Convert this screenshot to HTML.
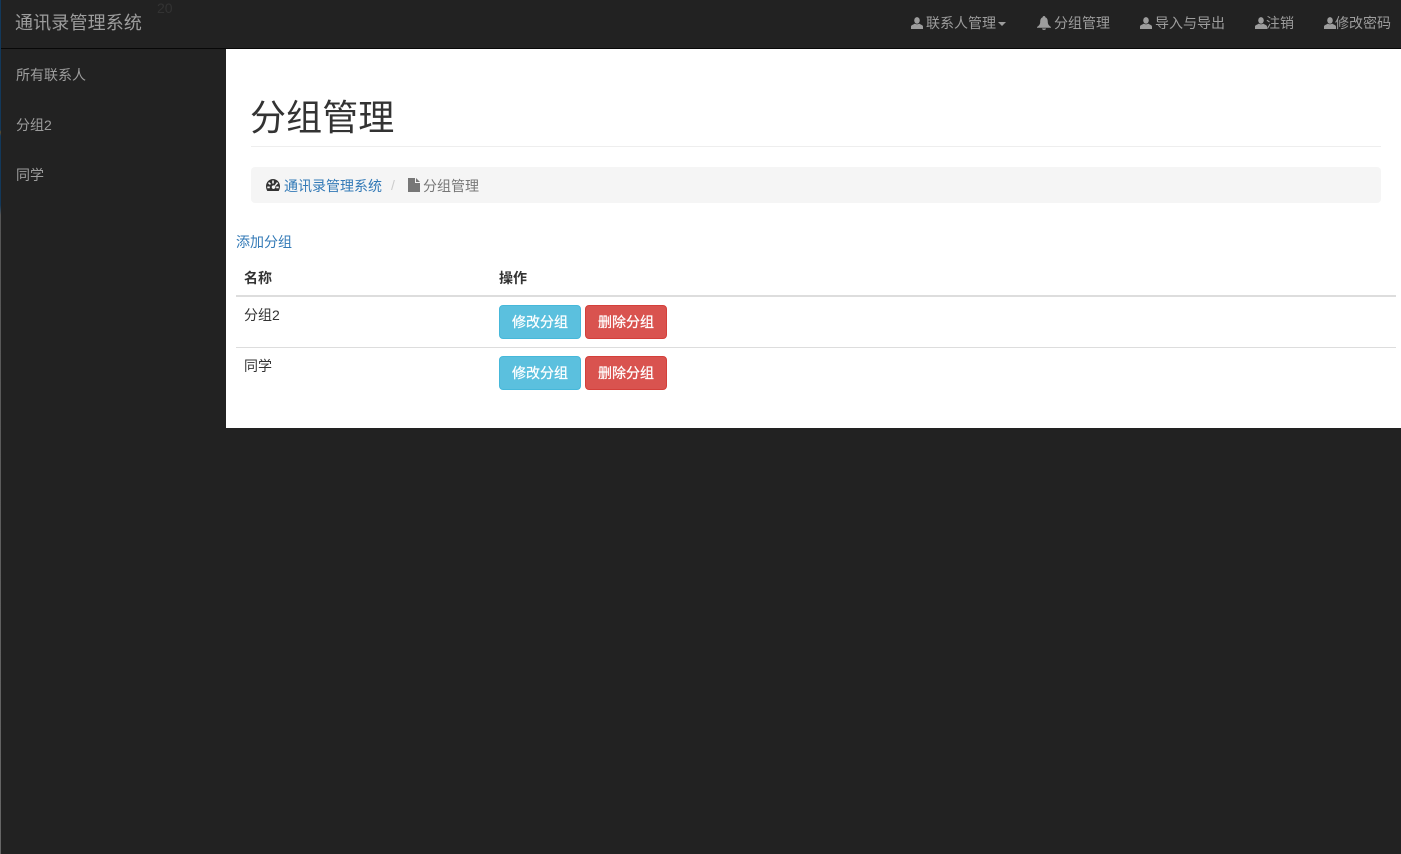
<!DOCTYPE html>
<html lang="zh-CN">
<head>
<meta charset="utf-8">
<title>通讯录管理系统</title>
<style>
*{box-sizing:border-box}
html,body{margin:0;padding:0}
body{width:1401px;height:854px;position:relative;overflow:hidden;background:#222;font-family:"Liberation Sans","Noto Sans CJK SC",sans-serif;font-size:14px;line-height:20px;color:#333}
.abs{position:absolute;white-space:nowrap}
#stripe{left:0;top:0;width:1px;height:854px;background:linear-gradient(to bottom,#12385a 0,#12385a 130px,#5b4a2c 132px,#12385a 136px,#12385a 205px,#555 215px,#666 100%)}
#navline{left:1px;top:48px;width:1400px;height:1px;background:#080808}
.brand{left:15px;top:13px;font-size:18px;color:#9d9d9d;line-height:20px;letter-spacing:.15px}
.num{left:157px;top:0;font-size:14px;color:#333;line-height:16px}
.nav{top:13px;color:#9d9d9d}
.nav svg,.bc svg{position:absolute;fill:currentColor}
.caret{position:absolute;width:0;height:0;border-top:4px solid #9d9d9d;border-left:4px solid transparent;border-right:4px solid transparent}
.side{left:16px;color:#9d9d9d}
#main{left:226px;top:49px;width:1175px;height:379px;background:#fff}
h1{position:absolute;margin:0;left:250px;top:93px;font-size:36px;font-weight:400;line-height:50px;color:#333;white-space:nowrap;letter-spacing:.1px}
#hr{left:251px;top:146px;width:1130px;height:1px;background:#eee}
#crumb{left:251px;top:167px;width:1130px;height:36px;background:#f5f5f5;border-radius:4px}
a{color:#337ab7;text-decoration:none}
.line{left:236px;width:1160px;background:#ddd}
.btn{position:absolute;width:82px;height:34px;border-radius:4px;border:1px solid;color:#fff;text-align:center;line-height:33px;font-size:14px;-webkit-text-stroke:.25px #fff}
.info{background:#5bc0de;border-color:#46b8da;left:499px}
.danger{background:#d9534f;border-color:#d43f3a;left:585px}
b{font-weight:700}
</style>
</head>
<body>
<div class="abs" id="main"></div>
<div class="abs" id="navline"></div>
<div class="abs" id="stripe"></div>

<div class="abs brand">通讯录管理系统</div>
<div class="abs num">20</div>

<div class="abs nav" style="left:911px;width:100px;height:20px">
  <svg style="left:0;top:4px" width="12" height="12" viewBox="0 0 12 12"><ellipse cx="6" cy="3.400" rx="2.800" ry="3.300"/><path d="M0 12V9.500C0 8.200 2.200 7.600 3.800 6.600C5 7.500 7 7.500 8.200 6.600C9.800 7.600 12 8.200 12 9.500V12Z"/></svg>
  <span style="position:absolute;left:15px;top:0;white-space:nowrap">联系人管理</span>
  <i class="caret" style="left:87px;top:9px"></i>
</div>
<div class="abs nav" style="left:1037px;width:80px;height:20px">
  <svg style="left:0;top:3px" width="14" height="14" viewBox="0 0 14 14"><path d="M7 0C8 0 8.300 .6 8.300 1.200C10.300 1.900 10.800 3.800 10.800 6C10.800 8.200 11.800 9.600 14 11V11.800H0V11C2.200 9.600 3.200 8.200 3.200 6C3.200 3.800 3.700 1.900 5.700 1.200C5.700 .6 6 0 7 0ZM5 12.500H9C9 13.400 8 14 7 14C6 14 5 13.400 5 12.500Z"/></svg>
  <span style="position:absolute;left:17px;top:0;white-space:nowrap">分组管理</span>
</div>
<div class="abs nav" style="left:1140px;width:90px;height:20px">
  <svg style="left:0;top:4px" width="12" height="12" viewBox="0 0 12 12"><ellipse cx="6" cy="3.400" rx="2.800" ry="3.300"/><path d="M0 12V9.500C0 8.200 2.200 7.600 3.800 6.600C5 7.500 7 7.500 8.200 6.600C9.800 7.600 12 8.200 12 9.500V12Z"/></svg>
  <span style="position:absolute;left:15px;top:0;white-space:nowrap">导入与导出</span>
</div>
<div class="abs nav" style="left:1255px;width:50px;height:20px">
  <svg style="left:0;top:4px" width="12" height="12" viewBox="0 0 12 12"><ellipse cx="6" cy="3.400" rx="2.800" ry="3.300"/><path d="M0 12V9.500C0 8.200 2.200 7.600 3.800 6.600C5 7.500 7 7.500 8.200 6.600C9.800 7.600 12 8.200 12 9.500V12Z"/></svg>
  <span style="position:absolute;left:11px;top:0;white-space:nowrap">注销</span>
</div>
<div class="abs nav" style="left:1324px;width:77px;height:20px">
  <svg style="left:0;top:4px" width="12" height="12" viewBox="0 0 12 12"><ellipse cx="6" cy="3.400" rx="2.800" ry="3.300"/><path d="M0 12V9.500C0 8.200 2.200 7.600 3.800 6.600C5 7.500 7 7.500 8.200 6.600C9.800 7.600 12 8.200 12 9.500V12Z"/></svg>
  <span style="position:absolute;left:11px;top:0;white-space:nowrap">修改密码</span>
</div>

<div class="abs side" style="top:65px">所有联系人</div>
<div class="abs side" style="top:115px">分组2</div>
<div class="abs side" style="top:165px">同学</div>

<h1>分组管理</h1>
<div class="abs" id="hr"></div>
<div class="abs" id="crumb"></div>

<svg class="abs" style="left:266px;top:179px" width="14" height="13" viewBox="0 0 14 13"><path fill="#333" fill-rule="evenodd" d="M7 0C10.900 0 14 3.300 14 7.300C14 9 13.500 10.700 12.700 12H1.300C.5 10.700 0 9 0 7.300C0 3.300 3.100 0 7 0ZM6.200 1.500V4.500H7.800V1.500ZM3 3L2 4.200L4 6L5 4.800ZM11 3L8.500 6.500C7.800 6.200 6.800 6.300 6.200 6.900C5.500 7.700 5.600 8.800 6.300 9.500C7.100 10.200 8.300 10.100 9 9.300C9.500 8.700 9.600 8 9.300 7.300L12.200 4.200ZM1.300 7.500V9.200H3.800V7.500ZM10.200 7.500V9.200H12.700V7.500Z"/></svg>
<a class="abs" style="left:284px;top:176px" href="#">通讯录管理系统</a>
<div class="abs" style="left:391px;top:175px;color:#ccc">/</div>
<svg class="abs" style="left:408px;top:178px" width="12" height="14" viewBox="0 0 12 14"><path fill="#777" d="M0 0H7V5H12V14H0ZM8 0L12 4H8Z"/></svg>
<div class="abs" style="left:423px;top:176px;color:#777">分组管理</div>

<a class="abs" style="left:236px;top:232px" href="#">添加分组</a>

<div class="abs" style="left:244px;top:268px"><b>名称</b></div>
<div class="abs" style="left:499px;top:268px"><b>操作</b></div>
<div class="abs line" style="top:295px;height:2px"></div>

<div class="abs" style="left:244px;top:305px">分组2</div>
<div class="btn info" style="top:305px">修改分组</div>
<div class="btn danger" style="top:305px">删除分组</div>
<div class="abs line" style="top:347px;height:1px"></div>

<div class="abs" style="left:244px;top:356px">同学</div>
<div class="btn info" style="top:356px">修改分组</div>
<div class="btn danger" style="top:356px">删除分组</div>
</body>
</html>
